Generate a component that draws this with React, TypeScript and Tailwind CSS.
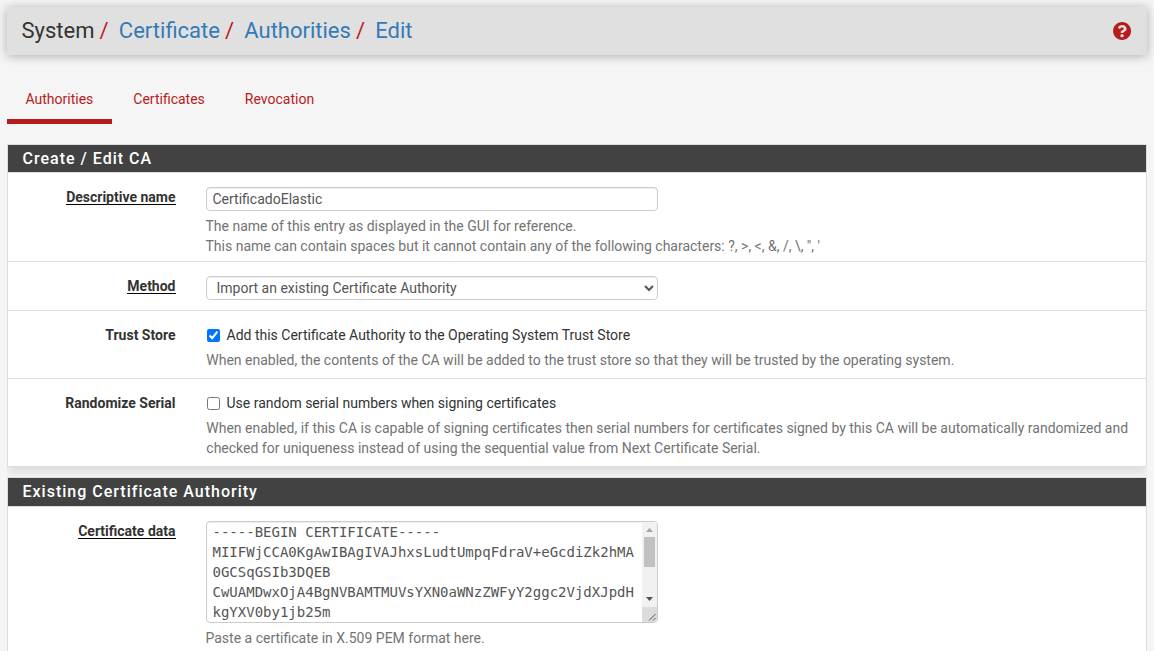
import type { ReactNode } from "react";

const certificate = [
  "-----BEGIN CERTIFICATE-----",
  "MIIFWjCCA0KgAwIBAgIVAJhxsLudtUmpqFdraV+eGcdiZk2hMA",
  "0GCSqGSIb3DQEB",
  "CwUAMDwxOjA4BgNVBAMTMUVsYXN0aWNzZWFyY2ggc2VjdXJpdH",
  "kgYXV0by1jb25m",
].join("\n");

function Crumb({ children }: { children: ReactNode }) {
  return (
    <>
      <span className="ml-[5px] mr-[10.3px] text-[#c2191d]">/</span>
      <a className="text-[#337ab7]">{children}</a>
    </>
  );
}

function Panel({ title, className, headingClass, children }: { title: string; className: string; headingClass: string; children: ReactNode }) {
  return (
    <section className={`mx-[7px] border border-[#ddd] bg-white shadow-[0_4px_10px_rgba(0,0,0,0.12)] [clip-path:inset(0_0_-14px_0)] ${className}`}>
      <h2 className={`border-b border-[#ddd] bg-[#424242] pl-[14.5px] pt-px text-[16px] font-medium leading-[26px] tracking-[1px] text-white ${headingClass}`}>
        {title}
      </h2>
      {children}
    </section>
  );
}

function Row({ label, required, className, children }: { label: string; required?: boolean; className: string; children: ReactNode }) {
  return (
    <div className={`flex items-start border-[#ddd] ${className}`}>
      <div className="mt-[14px] flex w-[167.5px] shrink-0 justify-end">
        <span className={`font-bold leading-[20px] text-[#333] ${required ? "h-[18px] border-b border-black" : ""}`}>{label}</span>
      </div>
      <div className="ml-[30px] mt-[14px] min-w-0 flex-1">{children}</div>
    </div>
  );
}

function Help({ children, className }: { children: ReactNode; className: string }) {
  return <p className={`leading-[20px] text-[#737373] ${className}`}>{children}</p>;
}

export default function App() {
  return (
    <div className="h-[651px] overflow-hidden bg-[#f5f5f5] pt-[7px] font-['Roboto',sans-serif] text-[14px] text-[#333]">
      <header className="mx-[7px] flex h-[48px] items-center justify-between bg-[#e0e0e0] pl-[14.5px] pr-[16px] shadow-[0_1px_10px_rgba(0,0,0,0.3)]">
        <h1 className="flex text-[22px] leading-[24px] text-[#333]">
          <span>System</span>
          <Crumb>Certificate</Crumb>
          <Crumb>Authorities</Crumb>
          <Crumb>Edit</Crumb>
        </h1>
        <svg viewBox="6 8 496 496" className="h-[18px] w-[18px] overflow-visible" fill="#b71c1c">
          <path d="M504 256c0 137-111 248-248 248S8 393 8 256 119 8 256 8s248 111 248 248zM262.700 90c-54.500 0-89.300 23-116.500 63.800-3.500 5.300-2.400 12.400 2.700 16.300l34.700 26.300c5.200 3.900 12.600 3 16.700-2.100 17.900-22.700 30.100-35.800 57.300-35.800 20.400 0 45.700 13.100 45.700 33 0 15-12.400 22.700-32.500 34C247.100 238.500 216 254.900 216 296v4c0 6.600 5.400 12 12 12h56c6.600 0 12-5.400 12-12v-1.300c0-28.500 83.200-29.600 83.200-106.700 0-58-60.200-102-116.500-102zM256 338c-25.400 0-46 20.600-46 46s20.600 46 46 46 46-20.600 46-46-20.600-46-46-46z" />
        </svg>
      </header>

      <nav className="ml-[7px] mt-[19px] flex h-[50px] leading-[20px] text-[#b71c1c]">
        <a className="w-[105px] border-b-[5px] border-[#b71c1c] pl-[18.5px] pt-[15px]">Authorities</a>
        <a className="ml-[21.3px] pt-[15px]">Certificates</a>
        <a className="ml-[40px] pt-[15px]">Revocation</a>
      </nav>

      <Panel title="Create / Edit CA" className="mt-[20px]" headingClass="h-[28px]">
        <Row label="Descriptive name" required className="h-[89px] border-b">
          <input
            type="text"
            defaultValue="CertificadoElastic"
            className="block h-[24px] w-[452px] rounded-[4px] border border-[#ccc] bg-white px-[6px] text-[14px] text-[#555] shadow-[inset_0_1px_1px_rgba(0,0,0,0.075)]"
          />
          <Help className="mt-[5px]">
            The name of this entry as displayed in the GUI for reference.
            <br />
            This name can contain spaces but it cannot contain any of the following characters: ?, &gt;, &lt;, &amp;, /, \, ", '
          </Help>
        </Row>
        <Row label="Method" required className="h-[49px] border-b">
          <select className="block h-[24px] w-[452px] rounded-[4px] border border-[#ccc] bg-white pl-[6px] pr-[5px] text-[14px] text-[#555] shadow-[inset_0_1px_1px_rgba(0,0,0,0.075)]">
            <option>Import an existing Certificate Authority</option>
          </select>
        </Row>
        <Row label="Trust Store" className="h-[68px] border-b">
          <label className="flex items-center leading-[20px]">
            <input type="checkbox" defaultChecked className="ml-[1px] mr-[7px] h-[13px] w-[13px]" />
            Add this Certificate Authority to the Operating System Trust Store
          </label>
          <Help className="ml-[0.8px] mt-[5px]">
            When enabled, the contents of the CA will be added to the trust store so that they will be trusted by the operating system.
          </Help>
        </Row>
        <Row label="Randomize Serial" className="h-[87px]">
          <label className="flex items-center leading-[20px]">
            <input type="checkbox" className="ml-[1px] mr-[7px] h-[13px] w-[13px]" />
            Use random serial numbers when signing certificates
          </label>
          <Help className="ml-[0.8px] mt-[5px]">
            When enabled, if this CA is capable of signing certificates then serial numbers for certificates signed by this CA will be automatically randomized and
            <br />
            checked for uniqueness instead of using the sequential value from Next Certificate Serial.
          </Help>
        </Row>
      </Panel>

      <Panel title="Existing Certificate Authority" className="mt-[10px]" headingClass="h-[29px]">
        <Row label="Certificate data" required className="h-[160px]">
          <div className="flex h-[102px] w-[452px] overflow-hidden rounded-[4px] border border-[#ccc] bg-white">
            <textarea
              defaultValue={certificate}
              className="block h-[100px] w-[435px] resize-none overflow-hidden whitespace-pre pl-[6px] font-['DejaVu_Sans_Mono',monospace] text-[14px] leading-[20px] text-[#555] shadow-[inset_0_1px_1px_rgba(0,0,0,0.075)]"
            />
            <div className="flex w-[15px] flex-col items-center bg-[#f1f1f1]">
              <svg viewBox="0 0 15 15" className="h-[15px] w-[15px]" fill="#a3a3a3">
                <path d="M4 10h7L7.500 6z" />
              </svg>
              <div className="h-[30px] w-[11px] bg-[#c1c1c1]" />
              <svg viewBox="0 0 15 15" className="mt-[25px] h-[15px] w-[15px]" fill="#505050">
                <path d="M4 5h7L7.500 9z" />
              </svg>
              <svg viewBox="0 0 15 15" className="h-[15px] w-[15px] bg-[#dcdcdc]" stroke="#555" fill="none">
                <path d="M7 13.500L13.500 7M11 13.500L13.500 11" />
              </svg>
            </div>
          </div>
          <Help className="mt-[5px]">Paste a certificate in X.509 PEM format here.</Help>
        </Row>
      </Panel>
    </div>
  );
}
